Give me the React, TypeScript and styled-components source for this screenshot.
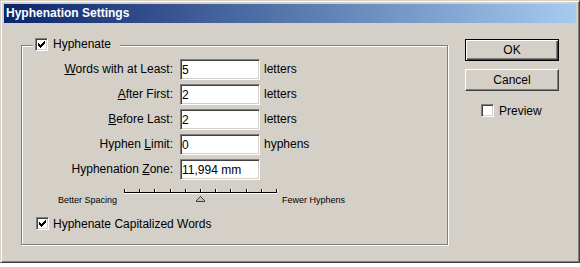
import styled, { createGlobalStyle } from 'styled-components';

const GlobalStyle = createGlobalStyle`
    body {
        margin: 0;
        background: #fff;
        font-family: "Liberation Sans", Arial, sans-serif;
        font-size: 12px;
        color: #000;
    }
`

type FieldRow = {
    label: string,
    key: string,
    value: string,
    unit?: string
};

const rows: FieldRow[] = [
    { label: 'ords with at Least:', key: 'W', value: '5', unit: 'letters' },
    { label: 'fter First:', key: 'A', value: '2', unit: 'letters' },
    { label: 'efore Last:', key: 'B', value: '2', unit: 'letters' },
    { label: 'Hyphen |imit:', key: 'L', value: '0', unit: 'hyphens' },
    { label: 'Hyphenation |one:', key: 'Z', value: '11,994 mm' },
];

// puts the underlined access key in place of "|" or at the start
function renderLabel(row: FieldRow) {
    if (row.label.includes('|')) {
        const [a, b] = row.label.split('|');
        return <>{a}<u>{row.key}</u>{b}</>;
    }
    return <><u>{row.key}</u>{row.label}</>;
}

function Check() {
    return (
        <svg width="7" height="7" viewBox="0 0 7 7" shapeRendering="crispEdges">
            <path
                fill="#000"
                d="M6 0h1v1h-1z M5 1h2v1h-2z M0 2h1v1h-1z M4 2h3v1h-3z M0 3h2v1h-2z M3 3h3v1h-3z M0 4h5v1h-5z M1 5h3v1h-3z M2 6h1v1h-1z"
            />
        </svg>
    );
}

function CheckBox({ checked }: { checked?: boolean }) {
    return <Box>{checked && <Check />}</Box>;
}

function SliderTrack() {
    const ticks = Array.from({ length: 11 }, (_, i) => Math.round(4 + i * 15.2));
    return (
        <svg width="160" height="18" viewBox="0 0 160 18" shapeRendering="crispEdges">
            <rect x="4" y="4" width="153" height="1" fill="#000" />
            <rect x="4" y="5" width="153" height="1" fill="#fff" />
            {ticks.map((x) => (
                <g key={x}>
                    <rect x={x} y="1" width="1" height="3" fill="#000" />
                    <rect x={x + 1} y="1" width="1" height="3" fill="#fff" />
                </g>
            ))}
            <polygon
                points="80.5,8.5 84.5,12.5 84.5,13.5 76.5,13.5 76.5,12.5"
                fill="#c0c0c0"
                stroke="#404040"
                strokeWidth="1"
            />
        </svg>
    );
}

export default function App() {
    return (
        <>
            <GlobalStyle />
            <Window>
                <TitleBar>Hyphenation Settings</TitleBar>
                <Body>
                    <Group>
                        <Legend>
                            <CheckBox checked />
                            <span>Hyphenate</span>
                        </Legend>
                        <Fields>
                            {rows.map((row) => (
                                <FieldLine key={row.key}>
                                    <Label>{renderLabel(row)}</Label>
                                    <Input readOnly defaultValue={row.value} />
                                    <Unit>{row.unit}</Unit>
                                </FieldLine>
                            ))}
                        </Fields>
                        <SliderRow>
                            <SmallText>Better Spacing</SmallText>
                            <SliderTrack />
                            <SmallText $gap={2}>Fewer Hyphens</SmallText>
                        </SliderRow>
                        <CheckRow>
                            <CheckBox checked />
                            <span>Hyphenate Capitalized Words</span>
                        </CheckRow>
                    </Group>
                    <Side>
                        <Button $default>OK</Button>
                        <Button>Cancel</Button>
                        <PreviewRow>
                            <CheckBox />
                            <span>Preview</span>
                        </PreviewRow>
                    </Side>
                </Body>
            </Window>
        </>
    );
}

const Window = styled.div`
    width: 580px;
    height: 263px;
    box-sizing: border-box;
    background: #d4d0c8;
    border: 1px solid;
    border-color: #d4d0c8 #404040 #404040 #d4d0c8;
    box-shadow: inset 1px 1px #fff, inset -1px -1px #808080;
    padding: 3px;
    display: flex;
    flex-direction: column;
`
const TitleBar = styled.div`
    height: 19px;
    line-height: 19px;
    padding-left: 2px;
    background: linear-gradient(to right, #0a246a, #a6caf0);
    color: #fff;
    font-weight: bold;
    font-size: 12px;
`
const Body = styled.div`
    display: flex;
    padding: 16px 0 0 17px;
`
const Group = styled.div`
    position: relative;
    width: 427px;
    height: 200px;
    margin-top: 6px;
    box-sizing: border-box;
    border: 1px solid #808080;
    box-shadow: inset 1px 1px #fff, 1px 1px #fff;
    padding: 13px 0 0 14px;
`
const Legend = styled.div`
    position: absolute;
    top: -9px;
    left: 11px;
    height: 14px;
    display: flex;
    align-items: center;
    gap: 5px;
    padding: 0 9px 0 2px;
    background: #d4d0c8;
`
const Box = styled.span`
    width: 13px;
    height: 13px;
    flex: none;
    box-sizing: border-box;
    background: #fff;
    border: 1px solid;
    border-color: #808080 #fff #fff #808080;
    box-shadow: inset 1px 1px #404040, inset -1px -1px #d4d0c8;
    display: flex;
    align-items: center;
    justify-content: center;
`
const Fields = styled.div`
    display: grid;
    grid-template-columns: 144px 80px auto;
    row-gap: 4px;
`
const FieldLine = styled.div`
    display: contents;
`
const Label = styled.div`
    text-align: right;
    padding-right: 7px;
    line-height: 21px;
    white-space: nowrap;
`
const Input = styled.input`
    width: 80px;
    height: 21px;
    box-sizing: border-box;
    margin: 0;
    padding: 0 1px;
    border: 1px solid;
    border-color: #808080 #fff #fff #808080;
    box-shadow: inset 1px 1px #404040, inset -1px -1px #d4d0c8;
    background: #fff;
    font-family: inherit;
    font-size: 12px;
    color: #000;
    outline: none;
`
const Unit = styled.div`
    padding-left: 4px;
    line-height: 21px;
`
const SliderRow = styled.div`
    display: flex;
    align-items: flex-end;
    height: 18px;
    margin-top: 8px;
    padding-left: 22px;
    svg {
        margin-left: 3px;
    }
`
const SmallText = styled.span<{ $gap?: number }>`
    font-size: 9px;
    line-height: 11px;
    margin-left: ${(p) => p.$gap ?? 0}px;
    white-space: nowrap;
`
const CheckRow = styled.div`
    display: flex;
    align-items: center;
    gap: 4px;
    height: 15px;
    margin-top: 10px;
`
const Side = styled.div`
    display: flex;
    flex-direction: column;
    margin-left: 17px;
`
const Button = styled.div<{ $default?: boolean }>`
    width: 94px;
    height: 22px;
    box-sizing: border-box;
    display: flex;
    align-items: center;
    justify-content: center;
    background: #d4d0c8;
    margin-bottom: 8px;
    ${(p) => p.$default
        ? `
        border: 1px solid #000;
        box-shadow: inset 1px 1px #fff, inset -1px -1px #404040, inset -2px -2px #808080;
        `
        : `
        border: 1px solid;
        border-color: #fff #404040 #404040 #fff;
        box-shadow: inset -1px -1px #808080;
        `}
`
const PreviewRow = styled.div`
    display: flex;
    align-items: center;
    gap: 5px;
    margin: 4px 0 0 16px;
    height: 15px;
`
